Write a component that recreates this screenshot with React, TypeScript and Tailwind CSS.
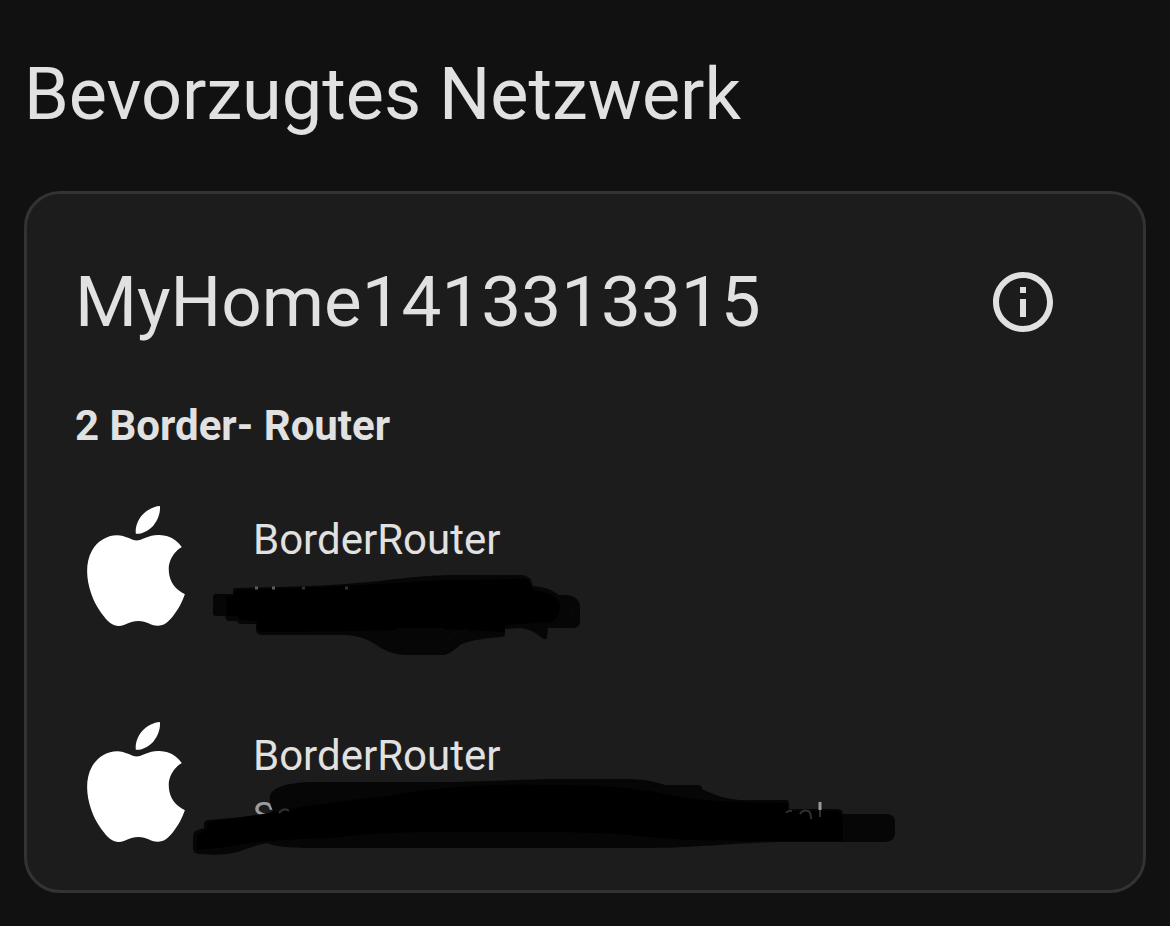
import type { ReactNode } from 'react';
import { MdInfoOutline } from 'react-icons/md';
import { SiApple } from 'react-icons/si';

interface BorderRouter {
  id: string;
  name: string;
  address: string;
  mask: ReactNode;
}

// Hand-painted strokes that hide the host names
function ShortMask() {
  return (
    <svg
      className="absolute top-[102px] left-[173px] h-[110px] w-[400px]"
      viewBox="200 560 400 110"
      aria-hidden="true"
    >
      <path
        fill="#060606"
        d="M213 597Q213 594 216 594H233V590Q233 588 236 588L280 587C320 586 350 584 380 581C410 577 435 575 460 575H520Q528 575 531 580L533 586C545 587 553 590 559 595H567Q580 597 580 607V621Q580 628 573 628H548L547 637Q547 641 542 638Q532 629 520 628L505 629V634Q505 637 501 637C485 638 473 640 462 644C455 648 451 655 442 655H408C393 655 383 650 375 644C367 639 360 636 345 635H263Q256 635 256 629V624H240Q238 624 237 621H229Q226 621 225 616H216Q213 616 213 613Z"
      />
      <path
        fill="#000"
        d="M226 596H233L236 590L300 588C360 586 400 582 450 580L528 579L533 590C550 592 560 598 560 606Q560 618 550 622L505 625V632L440 629C410 631 390 629 360 631L262 632Q257 632 257 627V621L240 620L237 616H227Z"
      />
      <path
        fill="none"
        stroke="#0c0c0c"
        strokeWidth="1"
        d="M396 629H444M448 640Q456 632 466 629M563 603Q574 608 574 618"
      />
      <path stroke="#5c5c5c" strokeWidth="3" d="M255 588h3M272 588h3" />
      <path stroke="#303030" strokeWidth="3" d="M302 588h3M345 588h3" />
    </svg>
  );
}

function LongMask() {
  return (
    <svg
      className="absolute top-[96px] left-[153px] h-[100px] w-[740px]"
      viewBox="180 770 740 100"
      aria-hidden="true"
    >
      <path
        fill="#060606"
        d="M270 796C272 788 285 782 318 782H458C498 781 533 779 560 779H625C641 779 653 781 665 785H698Q702 785 702 789C714 795 726 799 740 800H786Q789 800 789 804V809H836Q843 809 843 814H888Q895 815 895 822V832C895 839 891 842 883 842H780C730 843 695 848 640 848H320C292 848 277 847 267 843C255 845 245 850 233 853C224 855 213 855 200 854Q193 854 193 848V837Q193 831 198 830L204 828V824Q204 821 208 820L255 816Q266 815 273 811Q269 804 270 796Z"
      />
      <path
        fill="#000"
        d="M276 812C300 806 345 801 386 796C446 786 490 784 542 785C597 785 635 787 665 794C700 802 740 802 787 803L788 811H838L843 817V841H790C730 841 690 841 650 837C590 830 500 832 444 832C394 832 364 834 330 838C300 839 260 840 235 846L197 850V836L207 829L208 822Z"
      />
      <path stroke="#9a9a9a" strokeWidth="3" d="M820 802v8" />
      <path
        fill="none"
        stroke="#303030"
        strokeWidth="2"
        d="M820 810v7M800 814q3-5 8-3q3 1 3 8M786 813q2-3 6-2M279 813q5-6 10-2"
      />
    </svg>
  );
}

const ROUTERS: BorderRouter[] = [
  { id: '1', name: 'BorderRouter', address: '', mask: <ShortMask /> },
  { id: '2', name: 'BorderRouter', address: 'S', mask: <LongMask /> },
];

function RouterRow({ router }: { router: BorderRouter }) {
  return (
    <li className="relative flex h-[216px] items-center gap-[57px] px-[49px]">
      <SiApple className="size-[120px] shrink-0 text-white" />
      <div className="min-w-0 flex-1 pt-2">
        <p className="text-[42px] leading-[60px]">{router.name}</p>
        <p className="h-[60px] text-[36px] leading-[60px] text-[#9b9b9b]">{router.address}</p>
      </div>
      {router.mask}
    </li>
  );
}

function App() {
  return (
    <main className="min-h-screen bg-[#111111] px-6 pt-[49px] pb-8 font-[Roboto,sans-serif] text-[#e1e1e1]">
      <h1 className="text-[72px] leading-[92px]">Bevorzugtes Netzwerk</h1>

      <section className="mt-[50px] rounded-[36px] border-3 border-[#333333] bg-[#1c1c1c] pt-9">
        <div className="flex items-center justify-between px-12">
          <h2 className="text-[71px] leading-[92px]">MyHome1413313315</h2>
          <button
            type="button"
            aria-label="Info"
            className="flex size-36 shrink-0 items-center justify-center rounded-full"
          >
            <MdInfoOutline className="size-[72px]" />
          </button>
        </div>

        <h3 className="px-12 pt-5 text-[42px] leading-[64px] font-bold">2 Border- Router</h3>

        <ul>
          {ROUTERS.map(router => (
            <RouterRow key={router.id} router={router} />
          ))}
        </ul>
      </section>
    </main>
  );
}

export default App;
